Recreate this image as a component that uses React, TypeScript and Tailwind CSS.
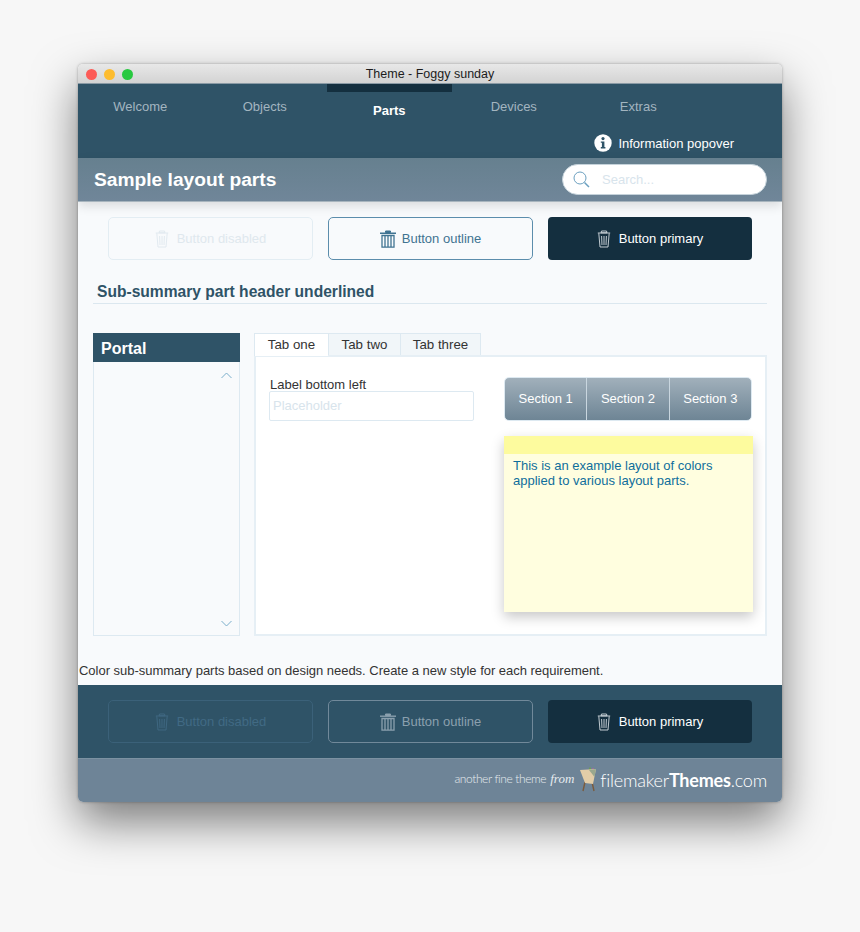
import React from 'react';

const TrashThin = ({ color }: { color: string }) => (
  <svg width="14" height="18" viewBox="0 0 14 18" fill="none" stroke={color} strokeWidth="0.9">
    <path d="M4.5 1 L9.5 1 L10 2.8 L4 2.8 Z" />
    <path d="M0.8 3 H13.2 M1.8 3.3 L3 17 H11 L12.2 3.3" />
    <path d="M4.6 6 L5 15 M7 6 V15 M9.4 6 L9 15" />
  </svg>
);

const TrashBold = ({ color }: { color: string }) => (
  <svg width="16" height="18" viewBox="0 0 16 18" fill="none" stroke={color}>
    <path d="M5.5 1 H10.5 V2.5 H5.5 Z" fill={color} strokeWidth="1" />
    <path d="M0 3.2 H16" strokeWidth="1.4" />
    <path d="M2 5.5 H14 V17.2 H2 Z" strokeWidth="1.3" />
    <path d="M5 6 V17 M8 6 V17 M11 6 V17" strokeWidth="1.3" />
  </svg>
);

const ButtonRow = ({ dark }: { dark?: boolean }) => (
  <div className="flex gap-[15px] pl-[30px]">
    <button
      className={`flex h-[43px] w-[205px] items-center justify-center gap-[8px] rounded-[5px] border text-[13px] ${
        dark ? 'border-[#3b6179] text-[#416a84]' : 'border-[#e3edf3] text-[#dfe8ee]'
      }`}
    >
      <TrashThin color={dark ? '#416a84' : '#dfe8ee'} />
      Button disabled
    </button>
    <button
      className={`flex h-[43px] w-[205px] items-center justify-center gap-[6px] rounded-[5px] border text-[13px] ${
        dark ? 'border-[#71899a] text-[#8ba0ae]' : 'border-[#5b8dac] text-[#3f7391]'
      }`}
    >
      <TrashBold color={dark ? '#8ba0ae' : '#3f7391'} />
      Button outline
    </button>
    <button className="flex h-[43px] w-[204px] items-center justify-center gap-[8px] rounded-[4px] bg-[#142f3f] text-[13px] text-white">
      <TrashThin color="#d5dde2" />
      Button primary
    </button>
  </div>
);

const Easel = () => (
  <svg width="18" height="25" viewBox="0 0 18 25">
    <path d="M7 15 L5 24 M14 15 L16 24" stroke="#7a5a3c" strokeWidth="1.4" />
    <path d="M12 0.5 L12 5" stroke="#6b9a5a" strokeWidth="2" />
    <path d="M15 1 L15 5" stroke="#a86a9a" strokeWidth="1.5" />
    <path d="M2 3 L18 2 L15 17 L7 16 Z" fill="#e2cda8" />
    <path d="M11 3 L18 2 L16.5 10 Z" fill="#9aa88e" />
  </svg>
);

const tabs = ['Welcome', 'Objects', 'Parts', 'Devices', 'Extras'];

export default function App() {
  return (
    <div className="min-h-[932px] overflow-hidden bg-[#f7f7f7] pt-[64px] pl-[78px] font-['Liberation_Sans',sans-serif]">
      <div className="w-[704px] overflow-hidden rounded-[5px] bg-[#f8fafc] shadow-[0_20px_45px_rgba(0,0,0,0.5),0_0_3px_rgba(0,0,0,0.3)]">
        {/* title bar */}
        <div className="relative flex h-[20px] items-center justify-center border-b border-[#8a9aa5] bg-gradient-to-b from-[#e8e8e8] to-[#d3d3d3] pt-px text-[12.5px] text-[#1c1c1c]">
          <div className="absolute top-[5px] left-[8px] flex gap-[7px]">
            <span className="size-[11px] rounded-full bg-[#fc5b57]" />
            <span className="size-[11px] rounded-full bg-[#fdbc2e]" />
            <span className="size-[11px] rounded-full bg-[#28c940]" />
          </div>
          Theme - Foggy sunday
        </div>

        {/* nav */}
        <div className="h-[74px] bg-[#2f5367]">
          <div className="flex">
            {tabs.map((t) =>
              t === 'Parts' ? (
                <div key={t} className="w-[124.5px] border-t-[8px] border-[#142f3f] pt-[9px] text-center text-[13px] font-bold text-white">
                  {t}
                </div>
              ) : (
                <div key={t} className="w-[124.5px] pt-[13px] text-center text-[13px] text-[#a3b5c0]">
                  {t}
                </div>
              ),
            )}
          </div>
          <div className="mt-[13px] flex items-center justify-end gap-[6px] pr-[48px] text-[13px] text-white">
            <svg width="18" height="18" viewBox="0 0 18 18">
              <circle cx="9" cy="9" r="8.7" fill="#fff" />
              <circle cx="9" cy="4.6" r="1.6" fill="#2f5367" />
              <path d="M6.8 7.4 H10.4 V13 H11.4 V14.4 H6.8 V13 H7.9 V8.8 H6.8 Z" fill="#2f5367" />
            </svg>
            Information popover
          </div>
        </div>

        {/* header */}
        <div className="relative z-10 flex h-[44px] items-center justify-between border-b border-[#a8b5be] bg-gradient-to-b from-[#66808f] to-[#708699] pr-[15px] pl-[16px] shadow-[0_4px_10px_rgba(0,0,0,0.12)]">
          <div className="pt-px text-[19.2px] font-bold text-white">Sample layout parts</div>
          <div className="flex h-[31px] w-[205px] items-center gap-[12px] rounded-full border border-[#c5d2da] bg-white pl-[10px] text-[13px] text-[#d8e4ec]">
            <svg width="17" height="17" viewBox="0 0 17 17" fill="none" stroke="#6ba0c0">
              <circle cx="7" cy="7" r="6" strokeWidth="1" />
              <path d="M11.5 11.5 L16 16" strokeWidth="1.5" />
            </svg>
            Search...
          </div>
        </div>

        {/* body */}
        <div className="pt-[15px]">
          <ButtonRow />

          <div className="mx-[15px] mt-[20px] h-[24px] border-b border-[#dbe7ef] pt-px pl-[4px] text-[15.6px] leading-[22px] font-bold text-[#2f5367]">
            Sub-summary part header underlined
          </div>

          <div className="mt-[29px] flex gap-[14px] pl-[15px]">
            {/* portal */}
            <div className="h-[303px] w-[147px] border border-t-0 border-[#dde9f1]">
              <div className="-mx-px flex h-[29px] items-center bg-[#2f5367] pt-[2px] pl-[8px] text-[16px] font-bold text-white">
                Portal
              </div>
              <div className="flex h-[274px] flex-col items-end justify-between pt-[10px] pr-[7px] pb-[9px]">
                <svg width="11" height="7" viewBox="0 0 11 7" fill="none" stroke="#7aaecb">
                  <path d="M0.5 6 L5.5 1 L10.5 6" />
                </svg>
                <svg width="11" height="7" viewBox="0 0 11 7" fill="none" stroke="#7aaecb">
                  <path d="M0.5 1 L5.5 6 L10.5 1" />
                </svg>
              </div>
            </div>

            {/* tab panel */}
            <div className="w-[513px]">
              <div className="relative z-10 flex h-[23px] text-[13.3px] text-[#333]">
                <div className="flex w-[74px] items-center justify-center border-t border-l border-[#dde9f1] bg-white pb-px">Tab one</div>
                <div className="flex h-[22px] w-[72px] items-center justify-center border-t border-l border-[#dde9f1] bg-[#f1f6f9]">Tab two</div>
                <div className="flex h-[22px] w-[81px] items-center justify-center border-x border-t border-[#dde9f1] bg-[#f1f6f9]">Tab three</div>
              </div>
              <div className="-mt-px flex h-[281px] gap-[30px] border-2 border-[#e6eff5] bg-white pt-[20px] pl-[13px]">
                <div className="mt-px w-[205px]">
                  <div className="h-[13px] pl-px text-[13px] leading-[13px] text-[#333]">Label bottom left</div>
                  <div className="flex h-[30px] items-center rounded-[2px] border border-[#dde9f1] pl-[3px] text-[13px] text-[#d8e4ec]">
                    Placeholder
                  </div>
                </div>
                <div className="w-[249px]">
                  <div className="flex h-[44px] w-[248px] overflow-hidden rounded-[5px] border border-[#dde9f1] bg-gradient-to-b from-[#a1b0bb] to-[#6e8595] text-[13px] text-white">
                    <div className="flex flex-1 items-center justify-center border-r border-[#c9d6df]">Section 1</div>
                    <div className="flex flex-1 items-center justify-center border-r border-[#c9d6df]">Section 2</div>
                    <div className="flex flex-1 items-center justify-center">Section 3</div>
                  </div>
                  <div className="mt-[15px] h-[176px] bg-[#fffedf] shadow-[0_5px_12px_rgba(0,0,0,0.22)]">
                    <div className="h-[18px] bg-[#fdfb9e]" />
                    <div className="pt-[4px] pl-[9px] text-[13px] leading-[15px] text-[#0f6e9c]">
                      This is an example layout of colors
                      <br />
                      applied to various layout parts.
                    </div>
                  </div>
                </div>
              </div>
            </div>
          </div>

          <div className="mt-[27px] h-[22px] pl-px text-[13px] leading-[15px] tracking-[-0.02px] text-[#333]">
            Color sub-summary parts based on design needs. Create a new style for each requirement.
          </div>
        </div>

        {/* footer */}
        <div className="h-[73px] bg-[#2f5367] pt-[15px]">
          <ButtonRow dark />
        </div>
        <div className="flex h-[44px] items-center justify-end gap-[3px] border-t border-[#7c92a2] bg-[#6e8497] pr-[15px] text-white">
          <span className="-mt-[3px] font-['Lato',sans-serif] text-[12px] font-light tracking-[-0.4px] text-[#e6ecf0]">another fine theme</span>
          <span className="-mt-[3px] ml-[1px] font-['Liberation_Serif',serif] text-[13px] text-[#e6ecf0] italic">from</span>
          <span className="mx-[1px] -mt-[2px] flex"><Easel /></span>
          <span className="-mt-px font-['Lato',sans-serif] text-[18px] font-light tracking-[-0.2px]">
            filemaker<span className="font-bold">Themes</span>.com
          </span>
        </div>
      </div>
    </div>
  );
}
